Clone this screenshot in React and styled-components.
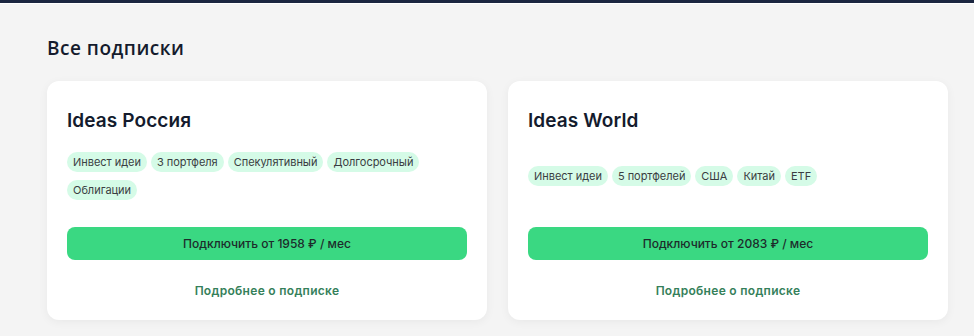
import React from "react";
import styled, { createGlobalStyle } from "styled-components";

const Global = createGlobalStyle`
  html, body { margin: 0; padding: 0; background: #f4f4f4; }
  body { font-family: Inter, "Noto Sans", sans-serif; color: #141b2d; }
  * { box-sizing: border-box; }
`;

const TopBar = styled.div`
  height: 3px;
  background: #1b2640;
  border-bottom: 1px solid #ffffff;
  box-sizing: content-box;
`;

const Page = styled.main`
  padding: 0 26px 16px 47px;
`;

const Heading = styled.h2`
  margin: 0;
  padding-top: 31px;
  height: 77px;
  font-family: "Open Sans", sans-serif;
  font-weight: 600;
  font-size: 19px;
  letter-spacing: 0.5px;
  line-height: 26px;
  color: #141b2d;
`;

const Grid = styled.div`
  display: grid;
  grid-template-columns: 1fr 1fr;
  column-gap: 21px;
`;

const Card = styled.section`
  background: #ffffff;
  border-radius: 12px;
  box-shadow: 0 2px 10px rgba(0, 0, 0, 0.05);
  padding: 28px 20px 21px;
  display: flex;
  flex-direction: column;
`;

const Title = styled.h3`
  margin: 0;
  font-family: Inter, sans-serif;
  font-weight: 600;
  font-size: 19px;
  letter-spacing: 0.1px;
  line-height: 24px;
  color: #141b2d;
`;

const Tags = styled.div`
  margin-top: 19px;
  flex: 1;
  min-height: 48px;
  display: flex;
  flex-wrap: wrap;
  align-content: center;
  gap: 8px 4px;
`;

const Tag = styled.span`
  height: 20px;
  padding: 0 6px;
  border-radius: 10px;
  background: #d5fbe7;
  color: #3a3d42;
  font-size: 11px;
  letter-spacing: -0.03px;
  line-height: 20px;
  white-space: nowrap;
`;

const Button = styled.button`
  margin-top: 27px;
  height: 33px;
  width: 100%;
  border: none;
  border-radius: 8px;
  background: #3ad882;
  color: #1d2b2b;
  font-family: Inter, sans-serif;
  font-size: 12px;
  font-weight: 500;
  cursor: pointer;
`;

const More = styled.a`
  margin-top: 23px;
  display: block;
  text-align: center;
  font-size: 12px;
  font-weight: 600;
  letter-spacing: 0.3px;
  line-height: 16px;
  color: #35805a;
  text-decoration: none;
`;

const plans = [
  {
    title: "Ideas Россия",
    tags: ["Инвест идеи", "3 портфеля", "Спекулятивный", "Долгосрочный", "Облигации"],
    price: "1958",
  },
  {
    title: "Ideas World",
    tags: ["Инвест идеи", "5 портфелей", "США", "Китай", "ETF"],
    price: "2083",
  },
];

export default function App() {
  return (
    <>
      <Global />
      <TopBar />
      <Page>
        <Heading>Все подписки</Heading>
        <Grid>
          {plans.map((p) => (
            <Card key={p.title}>
              <Title>{p.title}</Title>
              <Tags>
                {p.tags.map((t) => (
                  <Tag key={t}>{t}</Tag>
                ))}
              </Tags>
              <Button>Подключить от {p.price} ₽ / мес</Button>
              <More href="#">Подробнее о подписке</More>
            </Card>
          ))}
        </Grid>
      </Page>
    </>
  );
}
